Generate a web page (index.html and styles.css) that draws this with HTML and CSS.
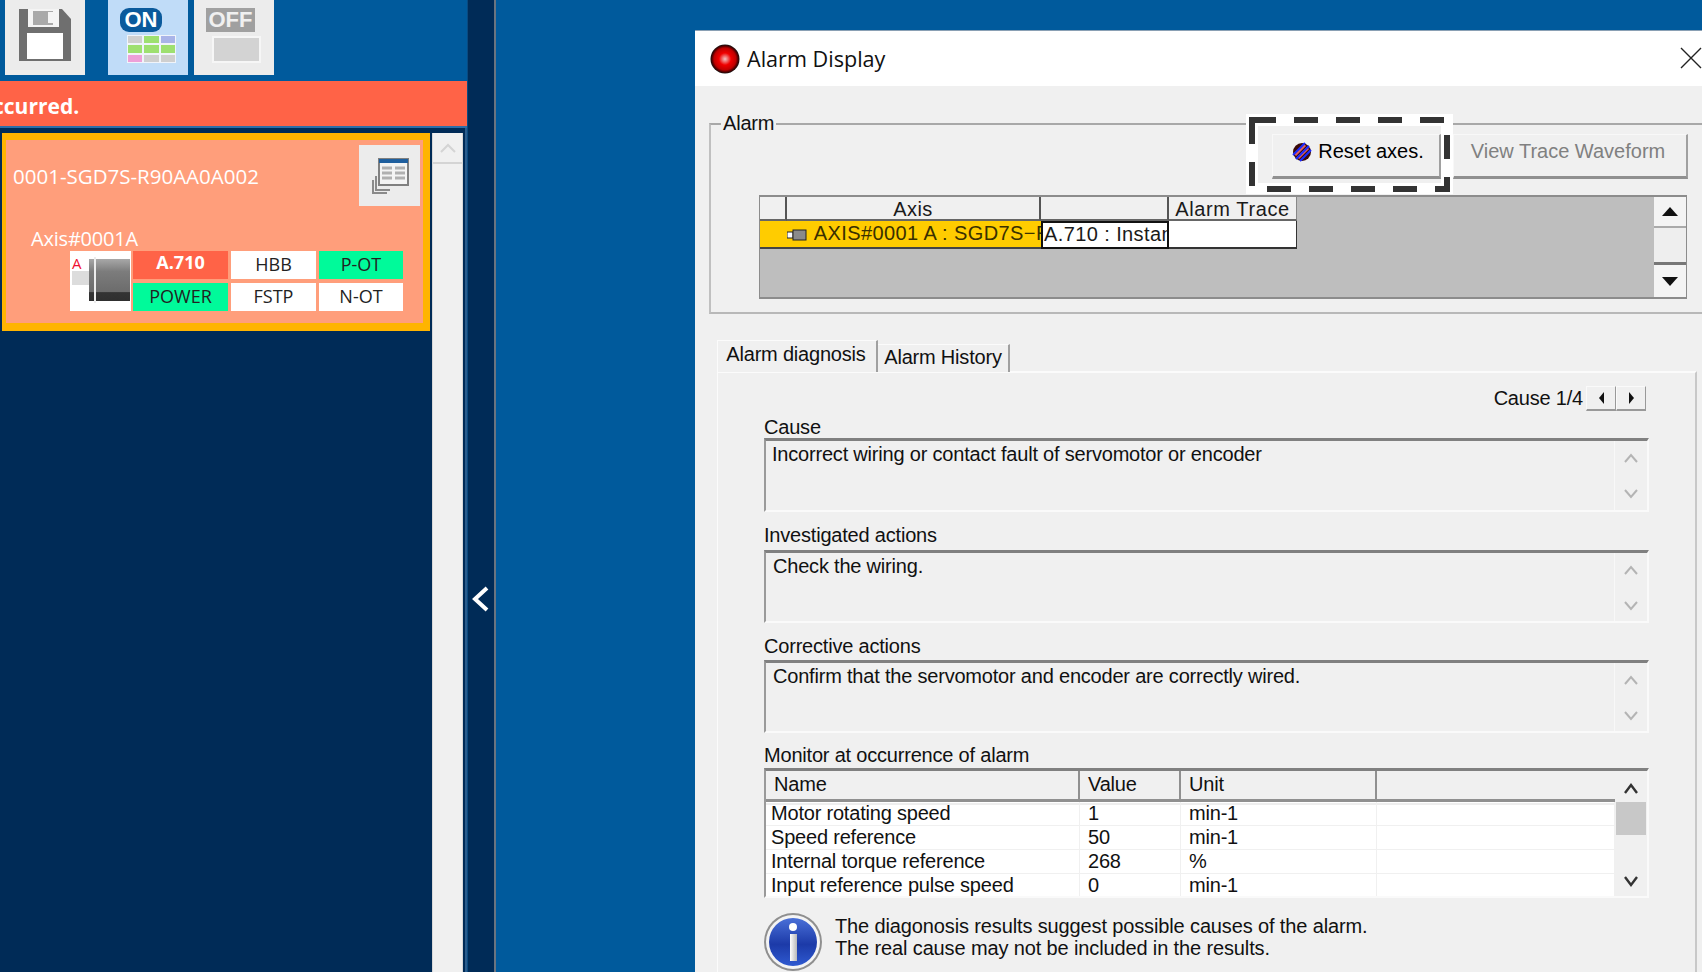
FILE: index.html
```html
<!DOCTYPE html>
<html lang="en">
<head>
    <meta charset="UTF-8">
    <meta name="viewport" content="width=device-width, initial-scale=1.0">
    <title>Alarm Display</title>
    <link rel="stylesheet" href="styles.css">
</head>
<body>
    <div class="side">
        <div class="toolbar">
            <button class="tool tool-save">
                <svg width="52" height="52" viewBox="0 0 52 52">
                    <path d="M0 0H43L52 10V52H0Z" fill="#6f6f6f"/>
                    <rect x="9" y="0" width="31" height="18" fill="#f4f4f4"/>
                    <rect x="14" y="2" width="20" height="14" fill="#a9a9a9"/>
                    <rect x="29" y="3" width="6" height="11" fill="#f4f4f4"/>
                    <rect x="8" y="24" width="36" height="26" fill="#fff"/>
                </svg>
            </button>
            <button class="tool tool-on">
                <span class="on-pill">ON</span>
                <span class="cells">
                    <i class="c-gray"></i><i class="c-green"></i><i class="c-blue"></i>
                    <i class="c-green"></i><i class="c-green"></i><i class="c-green"></i>
                    <i class="c-pink"></i><i class="c-gray"></i><i class="c-gray"></i>
                </span>
            </button>
            <button class="tool tool-off">
                <span class="off-tag">OFF</span>
                <span class="off-box"></span>
            </button>
        </div>
        <div class="alert-bar"><span>ccurred.</span></div>
        <div class="list-area">
            <div class="card">
                <div class="card-head">
                    <div class="card-title">0001-SGD7S-R90AA0A002</div>
                    <button class="detail-btn">
                        <svg width="38" height="36" viewBox="0 0 38 36">
                            <path d="M5 18V32H19M2 22V35H16" fill="none" stroke="#8a8a8a" stroke-width="2"/>
                            <rect x="8" y="1" width="29" height="26" fill="#f4f4f4" stroke="#808080" stroke-width="2"/>
                            <rect x="8" y="1" width="29" height="4" fill="#1f5f9e"/>
                            <path d="M11 10H21M11 15H21M11 20H21M24 10H34M24 15H34M24 20H34" stroke="#b0b0b0" stroke-width="3"/>
                        </svg>
                    </button>
                </div>
                <div class="axis-name">Axis#0001A</div>
                <div class="axis-row">
                    <div class="motor">
                        <span class="motor-a">A</span>
                        <svg width="61" height="46" viewBox="0 0 61 46">
                            <defs>
                                <linearGradient id="motorFill" x1="0" y1="0" x2="0" y2="1">
                                    <stop offset="0" stop-color="#a8a8a8"/>
                                    <stop offset="0.3" stop-color="#7c7c7c"/>
                                    <stop offset="0.78" stop-color="#6c6c6c"/>
                                    <stop offset="0.8" stop-color="#333"/>
                                    <stop offset="1" stop-color="#2f2f2f"/>
                                </linearGradient>
                            </defs>
                            <rect x="2" y="14" width="18" height="14" fill="#dcdcdc"/>
                            <rect x="19" y="2" width="41" height="42" fill="url(#motorFill)"/>
                            <rect x="24" y="0" width="2" height="46" fill="#ececec"/>
                        </svg>
                    </div>
                    <div class="status-grid">
                        <div class="st st-alarm">A.710</div>
                        <div class="st">HBB</div>
                        <div class="st st-on">P-OT</div>
                        <div class="st st-on">POWER</div>
                        <div class="st">FSTP</div>
                        <div class="st">N-OT</div>
                    </div>
                </div>
            </div>
            <div class="list-scroll">
                <div class="list-up">
                    <svg width="16" height="10" viewBox="0 0 16 10"><path d="M1 9L8 2L15 9" fill="none" stroke="#d4d4d4" stroke-width="2"/></svg>
                </div>
            </div>
        </div>
    </div>

    <div class="strip">
        <svg width="20" height="28" viewBox="0 0 20 28"><path d="M16 3L4 14L16 25" fill="none" stroke="#fff" stroke-width="4"/></svg>
    </div>

    <div class="desktop">
        <div class="dialog">
            <div class="title-bar">
                <svg class="title-icon" width="30" height="30" viewBox="0 0 30 30">
                    <defs>
                        <radialGradient id="redLamp">
                            <stop offset="0" stop-color="#f2c4c4"/>
                            <stop offset="0.22" stop-color="#f06060"/>
                            <stop offset="0.42" stop-color="#f00000"/>
                            <stop offset="0.75" stop-color="#c00000"/>
                            <stop offset="0.9" stop-color="#500000"/>
                            <stop offset="1" stop-color="#111"/>
                        </radialGradient>
                    </defs>
                    <circle cx="15" cy="15" r="14.5" fill="url(#redLamp)"/>
                </svg>
                <span class="title-text">Alarm Display</span>
                <svg class="close" width="22" height="22" viewBox="0 0 22 22"><path d="M1 1L21 21M21 1L1 21" stroke="#222" stroke-width="1.4"/></svg>
            </div>

            <div class="group">
                <span class="legend">Alarm</span>
                <div class="highlight">
                    <svg width="207" height="80" viewBox="0 0 207 80">
                        <rect x="6" y="6" width="195" height="69" fill="#f0f0f0" stroke="#fff" stroke-width="12"/>
                        <rect x="6" y="6" width="195" height="69" fill="none" stroke="#333" stroke-width="6" stroke-dasharray="24 18"/>
                    </svg>
                </div>
                <div class="group-btns">
                    <button class="btn btn-reset">
                        <svg width="20" height="20" viewBox="0 0 20 20">
                            <circle cx="10" cy="10" r="9" fill="#3a0a0a"/>
                            <path d="M3 13L13 3M6 16L16 6" stroke="#e06060" stroke-width="3"/>
                            <path d="M1 13L13 1M4 17L17 4M8 19L19 8" stroke="#1a2aff" stroke-width="2"/>
                        </svg>
                        Reset axes.
                    </button>
                    <button class="btn btn-off">View Trace Waveform</button>
                </div>
                <div class="alarm-grid">
                    <div class="grid-body">
                        <div class="grid-row">
                            <div class="gh gc-0"></div>
                            <div class="gh gc-1">Axis</div>
                            <div class="gh gc-2"></div>
                            <div class="gh gc-3">Alarm Trace</div>
                        </div>
                        <div class="grid-row">
                            <div class="gd gc-0 gd-sel"></div>
                            <div class="gd gc-1 gd-sel">
                                <svg width="20" height="12" viewBox="0 0 20 12"><rect x="0" y="3" width="6" height="6" fill="#fff" stroke="#222"/><rect x="6" y="1" width="13" height="10" fill="#8a8a8a" stroke="#222"/></svg>
                                AXIS#0001 A : SGD7S−R90AA0A002
                            </div>
                            <div class="gd gc-2 gd-box">A.710 : Instantaneous</div>
                            <div class="gd gc-3 gd-trace"></div>
                        </div>
                    </div>
                    <div class="grid-scroll">
                        <div class="gs-btn"><i class="tri-up"></i></div>
                        <div class="gs-thumb"></div>
                        <div class="gs-btn gs-down"><i class="tri-down"></i></div>
                    </div>
                </div>
            </div>

            <div class="tabs">
                <div class="tab tab-active">Alarm diagnosis</div>
                <div class="tab">Alarm History</div>
            </div>
            <div class="tab-panel">
                <div class="pager">
                    <span>Cause 1/4</span>
                    <button class="pg-btn"><i class="tri-left"></i></button>
                    <button class="pg-btn"><i class="tri-right"></i></button>
                </div>

                <div class="label lb-cause">Cause</div>
                <div class="textbox tb-cause">
                    <div class="tb-text">Incorrect wiring or contact fault of servomotor or encoder</div>
                    <div class="tb-scroll">
                        <svg width="14" height="10" viewBox="0 0 14 10"><path d="M1 9L7 2L13 9" fill="none" stroke="#b4b4b4" stroke-width="2"/></svg>
                        <svg width="14" height="10" viewBox="0 0 14 10"><path d="M1 1L7 8L13 1" fill="none" stroke="#b4b4b4" stroke-width="2"/></svg>
                    </div>
                </div>

                <div class="label lb-inv">Investigated actions</div>
                <div class="textbox">
                    <div class="tb-text">Check the wiring.</div>
                    <div class="tb-scroll">
                        <svg width="14" height="10" viewBox="0 0 14 10"><path d="M1 9L7 2L13 9" fill="none" stroke="#b4b4b4" stroke-width="2"/></svg>
                        <svg width="14" height="10" viewBox="0 0 14 10"><path d="M1 1L7 8L13 1" fill="none" stroke="#b4b4b4" stroke-width="2"/></svg>
                    </div>
                </div>

                <div class="label lb-cor">Corrective actions</div>
                <div class="textbox">
                    <div class="tb-text">Confirm that the servomotor and encoder are correctly wired.</div>
                    <div class="tb-scroll">
                        <svg width="14" height="10" viewBox="0 0 14 10"><path d="M1 9L7 2L13 9" fill="none" stroke="#b4b4b4" stroke-width="2"/></svg>
                        <svg width="14" height="10" viewBox="0 0 14 10"><path d="M1 1L7 8L13 1" fill="none" stroke="#b4b4b4" stroke-width="2"/></svg>
                    </div>
                </div>

                <div class="label lb-mon">Monitor at occurrence of alarm</div>
                <div class="monitor">
                    <div class="mon-main">
                        <div class="mon-row mon-head">
                            <div>Name</div><div>Value</div><div>Unit</div><div></div>
                        </div>
                        <div class="mon-row"><div>Motor rotating speed</div><div>1</div><div>min-1</div><div></div></div>
                        <div class="mon-row"><div>Speed reference</div><div>50</div><div>min-1</div><div></div></div>
                        <div class="mon-row"><div>Internal torque reference</div><div>268</div><div>%</div><div></div></div>
                        <div class="mon-row"><div>Input reference pulse speed</div><div>0</div><div>min-1</div><div></div></div>
                    </div>
                    <div class="mon-scroll">
                        <svg width="14" height="11" viewBox="0 0 14 11"><path d="M1 10L7 2L13 10" fill="none" stroke="#333" stroke-width="2.4"/></svg>
                        <div class="mon-thumb"></div>
                        <svg class="mon-arrow-down" width="14" height="11" viewBox="0 0 14 11"><path d="M1 1L7 9L13 1" fill="none" stroke="#333" stroke-width="2.4"/></svg>
                    </div>
                </div>

                <div class="note">
                    <svg class="note-icon" width="58" height="58" viewBox="0 0 58 58">
                        <defs>
                            <linearGradient id="infoFill" x1="0" y1="0" x2="0" y2="1">
                                <stop offset="0" stop-color="#4a70d8"/>
                                <stop offset="0.55" stop-color="#1c3aa8"/>
                                <stop offset="1" stop-color="#2f5ad0"/>
                            </linearGradient>
                            <linearGradient id="infoStem" x1="0" y1="0" x2="1" y2="0">
                                <stop offset="0" stop-color="#fff"/>
                                <stop offset="1" stop-color="#b8b8b8"/>
                            </linearGradient>
                        </defs>
                        <circle cx="29" cy="29" r="29" fill="#8f8f8f"/>
                        <circle cx="29" cy="29" r="27" fill="#f4f4f4"/>
                        <circle cx="29" cy="29" r="24" fill="url(#infoFill)"/>
                        <circle cx="29" cy="14" r="4" fill="#fff"/>
                        <rect x="26" y="21" width="7" height="27" fill="url(#infoStem)"/>
                    </svg>
                    <div class="note-text">
                        <div>The diagonosis results suggest possible causes of the alarm.</div>
                        <div>The real cause may not be included in the results.</div>
                    </div>
                </div>
            </div>
        </div>
    </div>
</body>
</html>
```

FILE: styles.css
```css
:root {
    --blue: #005a9c;
    --navy: #002b57;
    --panel: #f0f0f0;
    --tile: #ececec;
    --tomato: #ff6347;
    --green: #00fa9a;
}

* {
    box-sizing: border-box;
}

html, body {
    height: 100%;
}

body {
    margin: 0;
    display: flex;
    height: 972px;
    overflow: hidden;
    background-color: var(--blue);
    font-family: "Liberation Sans", Arial, sans-serif;
    font-size: 20px;
    color: #111;
}

button {
    font: inherit;
    margin: 0;
    border: none;
    padding: 0;
}

/* left side */
.side {
    width: 467px;
    flex: none;
    display: flex;
    flex-direction: column;
    background-color: var(--navy);
}

.toolbar {
    height: 81px;
    display: flex;
    padding-left: 5px;
    background-color: var(--blue);
}

.tool {
    width: 80px;
    height: 75px;
    margin-right: 6px;
    background-color: var(--tile);
    display: flex;
    flex-direction: column;
    position: relative;
}

.tool-save {
    margin-right: 23px;
    align-items: center;
    justify-content: center;
    padding-bottom: 5px;
}

.tool-on {
    background-color: #c0dcf8;
}

.on-pill {
    margin: 8px 0 0 12px;
    width: 42px;
    height: 24px;
    border-radius: 9px;
    background-color: #0a5a9c;
    color: #fff;
    font-weight: bold;
    font-size: 22px;
    line-height: 24px;
    text-align: center;
}

.cells {
    margin: 3px 0 0 19px;
    width: 49px;
    height: 28px;
    padding: 1px;
    background-color: #f0f4fa;
    display: grid;
    grid-template-columns: repeat(3, 1fr);
    grid-template-rows: repeat(3, 1fr);
    gap: 2px;
}

.cells i {
    display: block;
}

.c-gray { background-color: #cfcfcf; }
.c-green { background-color: #9ee070; }
.c-blue { background-color: #a9b4e8; }
.c-pink { background-color: #eda0d8; }

.off-tag {
    margin: 8px 0 0 12px;
    width: 49px;
    height: 24px;
    background-color: #a0a0a0;
    color: #f0f0f0;
    font-weight: bold;
    font-size: 22px;
    line-height: 24px;
    text-align: center;
}

.off-box {
    margin: 4px 0 0 18px;
    width: 49px;
    height: 27px;
    background-color: #d3d3d3;
    border: 2px solid #f6f6f6;
}

.alert-bar {
    height: 47px;
    display: flex;
    align-items: center;
    padding-top: 5px;
    background-color: var(--tomato);
    color: #fff;
    font-family: "Open Sans", sans-serif;
    font-weight: bold;
    font-size: 21px;
    overflow: hidden;
    border-bottom: 2px solid #2f6ea8;
}

.alert-bar span {
    margin-left: -7px;
}

.list-area {
    flex: 1;
    display: flex;
    padding: 5px 0 0 2px;
    border-right: 2px solid #2a5c8c;
}

.card {
    width: 428px;
    height: 198px;
    flex: none;
    background-color: #ff9e7b;
    border-style: solid;
    border-color: #ffb400;
    border-width: 7px 7px 8px 4px;
    color: #fff;
    font-family: "Open Sans", sans-serif;
}

.card-head {
    display: flex;
    justify-content: space-between;
    height: 81px;
    padding: 5px 3px 0 7px;
}

.card-title {
    margin-top: 17px;
    font-size: 20.5px;
    line-height: 28px;
}

.detail-btn {
    width: 61px;
    height: 61px;
    background-color: var(--tile);
    display: flex;
    align-items: center;
    justify-content: center;
}

.axis-name {
    margin: 4px 0 0 25px;
    font-size: 20px;
    line-height: 28px;
    height: 28px;
    letter-spacing: -0.2px;
}

.axis-row {
    display: flex;
    margin: -2px 0 0 64px;
}

.motor {
    width: 61px;
    height: 60px;
    background-color: #fff;
    position: relative;
    display: flex;
    align-items: flex-end;
    padding-bottom: 8px;
}

.motor svg {
    display: block;
}

.motor-a {
    position: absolute;
    left: 2px;
    top: 3px;
    color: #f01030;
    font-size: 15px;
    line-height: 18px;
}

.status-grid {
    margin-left: 2px;
    display: grid;
    grid-template-columns: 95px 85px 84px;
    grid-template-rows: 28px 28px;
    column-gap: 3px;
    row-gap: 4px;
}

.st {
    background-color: #fff;
    color: #222;
    font-size: 18px;
    line-height: 26px;
    text-align: center;
}

.st-alarm {
    background-color: var(--tomato);
    color: #fff;
    font-weight: bold;
    font-size: 18px;
    line-height: 23px;
}

.st-on {
    background-color: var(--green);
}

.list-scroll {
    width: 31px;
    margin-left: 2px;
    background-color: var(--panel);
    border-left: 1px solid #d8d8d8;
    border-right: 1px solid #d8d8d8;
}

.list-up {
    height: 31px;
    border-bottom: 2px solid #d4d4d4;
    display: flex;
    align-items: center;
    justify-content: center;
}

/* collapse strip */
.strip {
    width: 29px;
    flex: none;
    background-color: var(--navy);
    border-left: 1px solid #0a4a80;
    border-right: 2px solid #6a7480;
    display: flex;
    align-items: center;
    justify-content: center;
    padding-top: 226px;
}

/* desktop + dialog window */
.desktop {
    flex: 1;
    position: relative;
}

.dialog {
    position: absolute;
    left: 199px;
    top: 30px;
    width: 1007px;
    height: 942px;
    overflow: hidden;
    background-color: var(--panel);
    border-top: 1px solid #8aa0b4;
    letter-spacing: -0.2px;
}

.title-bar {
    height: 55px;
    background-color: #fff;
    display: flex;
    align-items: center;
    position: relative;
    padding-left: 15px;
    letter-spacing: 0;
}

.title-text {
    margin-left: 7px;
    font-family: "Open Sans", sans-serif;
    font-size: 21.6px;
}

.close {
    position: absolute;
    right: 0;
    top: 16px;
}

.group {
    position: relative;
    margin: 37px 0 0 14px;
    height: 191px;
    width: 1100px;
    border: 2px solid #d0d0d0;
    border-top-color: #a8a8a8;
    border-left-color: #c0c0c0;
    border-bottom-color: #b8b8b8;
}

.legend {
    position: absolute;
    left: 10px;
    top: -14px;
    padding: 0 2px;
    background-color: var(--panel);
    line-height: 24px;
}

.group-btns {
    display: flex;
    gap: 12px;
    margin: 9px 0 0 561px;
    position: relative;
}

.btn {
    height: 45px;
    padding-bottom: 8px;
    background-color: var(--panel);
    border-style: solid;
    border-width: 1px 2px 3px 1px;
    border-color: #f8f8f8 #a0a0a0 #909090 #f8f8f8;
    display: flex;
    align-items: center;
    justify-content: center;
    gap: 6px;
}

.btn-reset {
    width: 169px;
    padding-left: 4px;
}

.btn-off {
    width: 235px;
    padding-right: 4px;
    color: #808080;
}

.highlight {
    position: absolute;
    left: 535px;
    top: -11px;
    width: 207px;
    height: 80px;
}

.highlight svg {
    display: block;
}

.alarm-grid {
    position: relative;
    display: flex;
    width: 928px;
    height: 104px;
    margin: 16px 0 0 48px;
    background-color: #bebebe;
    border-top: 2px solid #8c8c8c;
    border-bottom: 2px solid #8c8c8c;
    border-left: 1px solid #8c8c8c;
    border-right: 1px solid #8c8c8c;
}

.grid-body {
    flex: 1;
    font-size: 20px;
    color: #1a1a1a;
    letter-spacing: 0.4px;
}

.grid-row {
    display: flex;
}

.gc-0 { width: 27px; }
.gc-1 { width: 254px; }
.gc-2 { width: 128px; }
.gc-3 { width: 128px; }

.gh {
    height: 24px;
    background-color: var(--panel);
    border-right: 2px solid #555;
    border-bottom: 2px solid #666;
    text-align: center;
    line-height: 24px;
    white-space: nowrap;
    overflow: hidden;
}

.gc-3.gh {
    border-right: 1px solid #888;
    letter-spacing: 0.6px;
}

.gd {
    height: 28px;
    line-height: 24px;
    white-space: nowrap;
    overflow: hidden;
}

.gd-sel {
    background-color: #ffcc00;
    border-bottom: 2px solid #444;
    color: #3a3000;
}

.gd-sel svg {
    vertical-align: -1px;
    margin-right: 2px;
}

.gd-box {
    background-color: #fff;
    border: 2px solid #111;
    line-height: 22px;
    padding-left: 1px;
}

.gd-trace {
    background-color: #fff;
    border-right: 1px solid #333;
    border-bottom: 2px solid #333;
}

.grid-scroll {
    width: 32px;
    flex: none;
    margin-left: auto;
    background-color: var(--panel);
    display: flex;
    flex-direction: column;
}

.gs-btn {
    height: 31px;
    display: flex;
    align-items: center;
    justify-content: center;
    border-bottom: 2px solid #aaa;
    background-color: #f4f4f4;
}

.gs-thumb {
    height: 37px;
    background-color: #eee;
    border-bottom: 3px solid #777;
}

.gs-down {
    flex: 1;
    border-bottom: 0;
    background-color: #f4f4f4;
}

.tri-up, .tri-down, .tri-left, .tri-right {
    display: block;
    width: 0;
    height: 0;
}

.tri-up {
    border-left: 8px solid transparent;
    border-right: 8px solid transparent;
    border-bottom: 9px solid #111;
}

.tri-down {
    border-left: 8px solid transparent;
    border-right: 8px solid transparent;
    border-top: 9px solid #111;
}

.tri-left {
    border-top: 6px solid transparent;
    border-bottom: 6px solid transparent;
    border-right: 5px solid #111;
}

.tri-right {
    border-top: 6px solid transparent;
    border-bottom: 6px solid transparent;
    border-left: 5px solid #111;
}

/* tabs */
.tabs {
    display: flex;
    align-items: flex-end;
    height: 32px;
    margin: 25px 0 0 22px;
}

.tab {
    height: 28px;
    width: 132px;
    text-align: center;
    line-height: 24px;
    background-color: var(--panel);
    border-top: 1px solid #fbfbfb;
    border-right: 2px solid #a0a0a0;
    position: relative;
    top: 1px;
}

.tab-active {
    height: 32px;
    width: 161px;
    padding-right: 2px;
    border-left: 1px solid #fbfbfb;
    line-height: 27px;
    z-index: 1;
}

.tab-panel {
    width: 980px;
    height: 640px;
    margin-left: 22px;
    padding: 13px 49px 0 46px;
    border-top: 2px solid #fbfbfb;
    border-left: 1px solid #fbfbfb;
    border-right: 2px solid #c8c8c8;
}

.pager {
    display: flex;
    justify-content: flex-end;
    align-items: center;
    height: 25px;
}

.pager span {
    margin-right: 3px;
}

.pg-btn {
    width: 30px;
    height: 25px;
    background-color: var(--panel);
    border-style: solid;
    border-width: 1px 1px 2px 1px;
    border-color: #fafafa #999 #999 #fafafa;
    display: flex;
    align-items: center;
    justify-content: center;
}

.label {
    line-height: 22px;
}

.lb-cause { margin-top: 5px; }
.lb-inv { margin-top: 12px; margin-bottom: 4px; }
.lb-cor { margin-top: 12px; margin-bottom: 3px; }
.lb-mon { margin-top: 11px; margin-bottom: 2px; }

.textbox {
    display: flex;
    width: 885px;
    height: 73px;
    border-top: 3px solid #808080;
    border-left: 2px solid #9a9a9a;
    border-right: 2px solid #fafafa;
    border-bottom: 2px solid #fafafa;
}

.tb-cause {
    height: 74px;
}

.tb-text {
    flex: 1;
    padding: 1px 0 0 7px;
    line-height: 24px;
}

.tb-cause .tb-text {
    padding-left: 6px;
}

.tb-scroll {
    width: 33px;
    border-left: 1px solid #f8f8f8;
    display: flex;
    flex-direction: column;
    align-items: center;
    gap: 26px;
    padding-top: 12px;
}

.monitor {
    display: flex;
    width: 885px;
    height: 130px;
    border-top: 3px solid #808080;
    border-left: 2px solid #9a9a9a;
    border-right: 2px solid #fafafa;
    border-bottom: 2px solid #fafafa;
    background-color: #fff;
}

.mon-main {
    flex: 1;
    overflow: hidden;
}

.mon-row {
    display: grid;
    grid-template-columns: 314px 101px 196px 1fr;
    height: 24px;
    line-height: 23px;
    border-bottom: 1px solid #f0f0f0;
}

.mon-row > div {
    padding-left: 5px;
    border-right: 1px solid #f0f0f0;
    white-space: nowrap;
}

.mon-row > div:nth-child(n+2) {
    padding-left: 8px;
}

.mon-head {
    height: 31px;
    line-height: 27px;
    background-color: var(--panel);
    border-bottom: 3px solid #909090;
    box-shadow: 0 1px 0 #fff, 0 3px 0 #eee;
}

.mon-head > div {
    border-right: 2px solid #909090;
    padding-left: 8px;
}

.mon-head > div:last-child {
    border-right: 0;
}

.mon-scroll {
    width: 32px;
    background-color: var(--panel);
    display: flex;
    flex-direction: column;
    align-items: center;
    padding-top: 12px;
}

.mon-thumb {
    width: 30px;
    height: 33px;
    margin-top: 8px;
    background-color: #c8c8c8;
}

.mon-arrow-down {
    margin-top: 41px;
}

.note {
    display: flex;
    margin-top: 15px;
}

.note-icon {
    flex: none;
}

.note-text {
    margin: 2px 0 0 13px;
    line-height: 22px;
    letter-spacing: -0.13px;
}
```
